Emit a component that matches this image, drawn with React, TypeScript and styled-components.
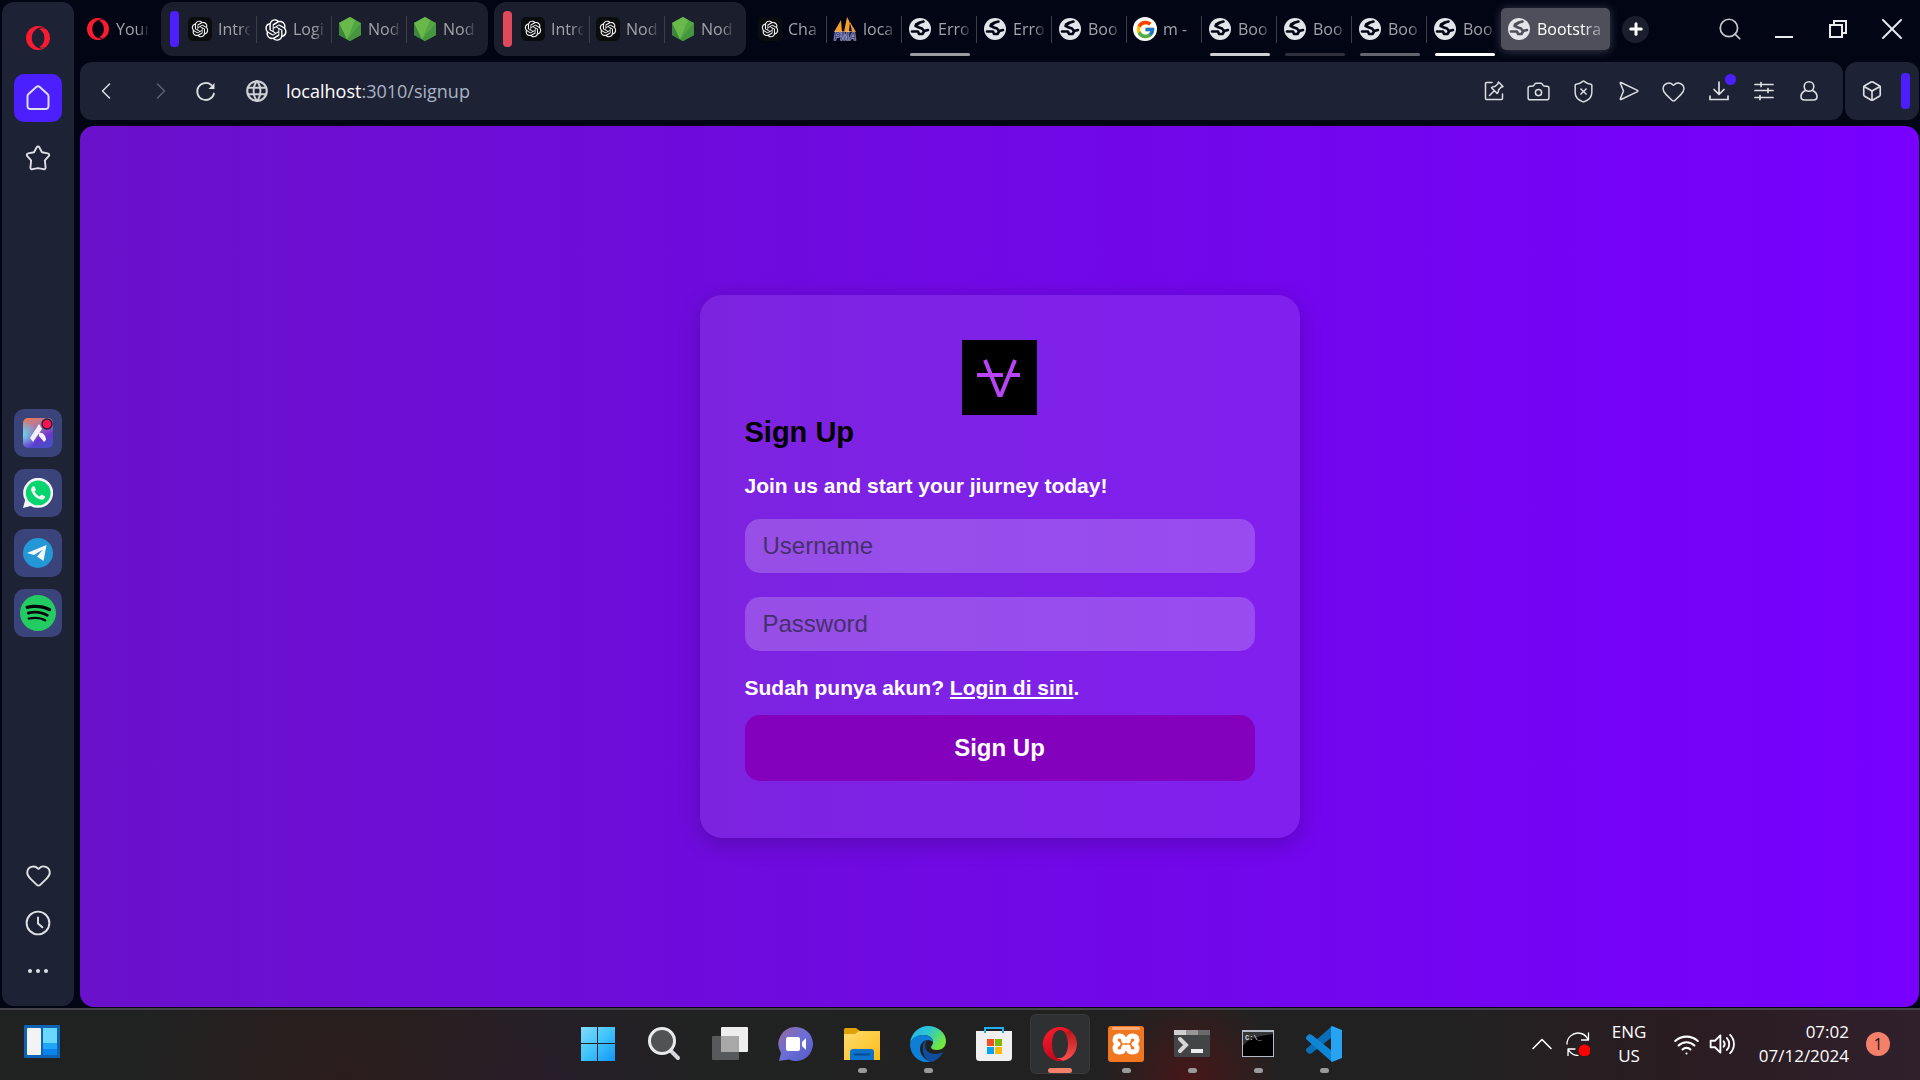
import React, { ReactNode } from "react";
import styled, { createGlobalStyle } from "styled-components";
import { Box, Camera, Heart, Plus, Search, ShieldX, Wifi, X } from "lucide-react";
import { SiOpera, SiSpotify } from "react-icons/si";
import { RiOpenaiFill } from "react-icons/ri";
import { FcGoogle } from "react-icons/fc";
import { TbWorld } from "react-icons/tb";

const uiFont = `"Open Sans", "Noto Sans", sans-serif`;
const pageFont = `"Liberation Sans", Arial, sans-serif`;

const GlobalStyle = createGlobalStyle`
  *, *::before, *::after { box-sizing: border-box; }
  body { margin: 0; background: #020514; font-family: ${uiFont}; }
  button { border: 0; padding: 0; background: none; color: inherit; font: inherit; cursor: pointer; }
  svg { display: block; flex: none; }
`;

/* ---------- shell ---------- */

const Desktop = styled.div`
  min-height: 100vh;
  display: flex;
  flex-direction: column;
  overflow: hidden;
`;

const Browser = styled.div`
  flex: 1;
  display: flex;
  gap: 6px;
  padding: 2px 1px 1px 2px;
  background: #020514;
`;

const Main = styled.div`
  flex: 1;
  min-width: 0;
  display: flex;
  flex-direction: column;
  gap: 6px;
`;

/* ---------- sidebar ---------- */

const Sidebar = styled.nav`
  width: 72px;
  margin-bottom: 1px;
  padding: 12px 0 11px;
  display: flex;
  flex-direction: column;
  align-items: center;
  justify-content: space-between;
  border-radius: 12px;
  background: #1e2235;
`;

const SideGroup = styled.div<{ $gap?: number; $offset?: number }>`
  display: flex;
  flex-direction: column;
  gap: ${(p) => p.$gap ?? 0}px;
  padding-top: ${(p) => p.$offset ?? 0}px;
`;

const SideButton = styled.button<{ $fill?: string }>`
  width: 48px;
  height: 48px;
  display: grid;
  place-items: center;
  border-radius: 10px;
  color: #dfe1e6;
  background: ${(p) => p.$fill ?? "transparent"};
`;

/* ---------- tabs ---------- */

const TabStrip = styled.div`
  height: 54px;
  display: flex;
  align-items: stretch;
`;

const Tabs = styled.div`
  display: flex;
  gap: 6px;
  min-width: 0;
`;

const TabGroup = styled.div<{ $tinted?: boolean }>`
  display: flex;
  align-items: center;
  padding: ${(p) => (p.$tinted ? "0 6px 0 9px" : "0")};
  border-radius: 12px;
  background: ${(p) => (p.$tinted ? "#1b1e2c" : "transparent")};
`;

const Island = styled.span<{ $color: string }>`
  width: 9px;
  height: 36px;
  margin-right: 3px;
  border-radius: 4px;
  background: ${(p) => p.$color};
`;

const Tab = styled.button`
  position: relative;
  width: 75px;
  height: 54px;
  padding-left: 6px;
  display: flex;
  align-items: center;
  gap: 6px;
  color: #a3a4aa;
`;

const ActiveTab = styled.button`
  width: 109px;
  height: 42px;
  margin: 6px 0 0 -7px;
  padding: 0 4px 0 6px;
  display: flex;
  align-items: center;
  gap: 6px;
  border-radius: 5px;
  color: #ffffff;
  background: #4e4f5a;
  box-shadow: 0 1px 10px rgba(130, 130, 150, 0.45);
`;

const TabIcon = styled.span`
  flex: none;
  width: 24px;
  height: 24px;
  display: grid;
  place-items: center;
`;

const TabLabel = styled.span`
  flex: 1;
  min-width: 0;
  overflow: hidden;
  white-space: nowrap;
  text-align: left;
  font-size: 16px;
  line-height: 24px;
  mask-image: linear-gradient(to right, #000 65%, rgba(0, 0, 0, 0.15));
`;

const TabDivider = styled.span<{ $visible: boolean }>`
  width: 1px;
  height: 27px;
  background: ${(p) => (p.$visible ? "#3d404b" : "transparent")};
`;

const Underline = styled.span<{ $color: string }>`
  position: absolute;
  left: 8px;
  bottom: 0;
  width: 60px;
  height: 3px;
  border-radius: 2px;
  background: ${(p) => p.$color};
`;

const ChatBadge = styled.span`
  width: 24px;
  height: 24px;
  display: grid;
  place-items: center;
  border-radius: 5px;
  color: #f2f2f2;
  background: #0b0c0e;
`;

const GoogleBadge = styled(ChatBadge)`
  border-radius: 50%;
  background: #ffffff;
`;

const NewTab = styled.button`
  align-self: center;
  width: 27px;
  height: 27px;
  margin-left: 12px;
  display: grid;
  place-items: center;
  border-radius: 50%;
  color: #ffffff;
  background: #1b1e2c;
`;

const WindowControls = styled.div`
  display: flex;
  margin-left: auto;
`;

const WindowButton = styled.button`
  width: 54px;
  display: grid;
  place-items: center;
  color: #e8eaf0;
`;

/* ---------- toolbar ---------- */

const ToolbarRow = styled.div`
  height: 58px;
  display: flex;
  gap: 2px;
`;

const AddressBar = styled.div`
  flex: 1;
  display: flex;
  align-items: center;
  padding: 0 12px 0 3px;
  border-radius: 12px;
  background: #1e2235;
`;

const ToolButton = styled.button<{ $dim?: boolean }>`
  position: relative;
  width: 45px;
  height: 45px;
  display: grid;
  place-items: center;
  color: ${(p) => (p.$dim ? "#5d6070" : "#dcdee3")};
`;

const NavButtons = styled.div`
  display: flex;
  gap: 10px;
`;

const SiteIcon = styled.span`
  margin: 0 16px;
  color: #cdd0d4;
`;

const Address = styled.div`
  flex: 1;
  font-size: 18px;
  line-height: 24px;
  color: #a9b4c4;
`;

const Host = styled.span`
  color: #ffffff;
`;

const Dot = styled.span`
  position: absolute;
  top: 5px;
  right: 5px;
  width: 11px;
  height: 11px;
  border-radius: 50%;
  background: #4b1fff;
`;

const SidePanelBar = styled.div`
  width: 74px;
  padding: 0 9px 0 4px;
  display: flex;
  align-items: center;
  justify-content: space-between;
  border-radius: 12px;
  background: #1e2235;
`;

const PanelHandle = styled.span`
  width: 9px;
  height: 36px;
  border-radius: 4px;
  background: #4b1fff;
`;

/* ---------- web page ---------- */

const Viewport = styled.main`
  flex: 1;
  display: flex;
  align-items: center;
  justify-content: center;
  border-radius: 14px;
  background: linear-gradient(to right, #6a11cb, #7700ff);
  font-family: ${pageFont};
`;

const Card = styled.form`
  width: 600px;
  max-width: 100%;
  padding: 45px 45px 57px;
  display: flex;
  flex-direction: column;
  border-radius: 22px;
  background: rgba(255, 255, 255, 0.1);
  box-shadow: 0 6px 22px rgba(0, 0, 0, 0.2);
`;

const Logo = styled.div`
  align-self: center;
  width: 75px;
  height: 75px;
  background: #000000;
`;

const Title = styled.h2`
  margin: 0 0 24px;
  font-size: 29px;
  line-height: 34px;
  color: #000000;
`;

const Note = styled.p<{ $after: number }>`
  margin: 0 0 ${(p) => p.$after}px;
  font-size: 21px;
  font-weight: 700;
  line-height: 25px;
  color: #ffffff;
`;

const Field = styled.input`
  width: 100%;
  height: 54px;
  margin-bottom: 24px;
  padding: 0 18px;
  border: 0;
  border-radius: 15px;
  outline: 0;
  font-family: ${pageFont};
  font-size: 24px;
  color: #1d1030;
  background: rgba(255, 255, 255, 0.2);
  &::placeholder { color: #46306b; opacity: 1; }
`;

const LoginLink = styled.a`
  color: #ffffff;
`;

const Submit = styled.button`
  height: 66px;
  border-radius: 15px;
  font-family: ${pageFont};
  font-size: 24px;
  font-weight: 700;
  color: #ffffff;
  background: #8300bd;
`;

/* ---------- taskbar ---------- */

const Taskbar = styled.footer`
  height: 72px;
  padding-bottom: 2px;
  display: grid;
  grid-template-columns: 1fr auto 1fr;
  align-items: center;
  border-top: 2px solid #454347;
  background:
    radial-gradient(circle at 62% 100%, rgba(96, 16, 16, 0.6), transparent 90px),
    radial-gradient(circle at 18% 100%, rgba(60, 20, 20, 0.4), transparent 220px),
    radial-gradient(circle at 28% 100%, rgba(50, 24, 56, 0.35), transparent 160px),
    linear-gradient(to right, #202222 0%, #222122 76%, #2a1c21 88%, #30202c 100%);
  color: #ffffff;
`;

const TaskStart = styled.div`
  padding-left: 24px;
`;

const TaskApps = styled.div`
  display: flex;
  gap: 6px;
  padding-left: 2px;
`;

const TaskApp = styled.button<{ $active?: boolean }>`
  position: relative;
  width: 60px;
  height: 60px;
  display: grid;
  place-items: center;
  border-radius: 6px;
  border: 1px solid ${(p) => (p.$active ? "#3a3a3c" : "transparent")};
  background: ${(p) => (p.$active ? "#2f3031" : "transparent")};
`;

const Running = styled.span<{ $active?: boolean }>`
  position: absolute;
  bottom: 0;
  justify-self: center;
  width: ${(p) => (p.$active ? 24 : 9)}px;
  height: 5px;
  border-radius: 3px;
  background: ${(p) => (p.$active ? "#f4806a" : "#9b9a9b")};
`;

const Tray = styled.div`
  display: flex;
  align-items: center;
  justify-content: flex-end;
  padding-right: 30px;
  font-size: 17px;
  line-height: 24px;
`;

const TrayButton = styled.button`
  width: 36px;
  height: 48px;
  display: grid;
  place-items: center;
`;

const Language = styled.button`
  width: 66px;
  text-align: center;
`;

const Network = styled.div`
  display: flex;
  margin-left: 6px;
`;

const Clock = styled.div`
  width: 109px;
  text-align: right;
`;

const Badge = styled.span`
  width: 24px;
  height: 24px;
  margin-left: 17px;
  border-radius: 50%;
  font-size: 16px;
  text-align: center;
  color: #1d1514;
  background: #f4806a;
`;

/* ---------- drawings ---------- */

type IconProps = { size?: number; width?: number; children: ReactNode };

const Line = ({ size = 24, width = 1.5, children }: IconProps) => (
  <svg width={size} height={size} viewBox="0 0 24 24" fill="none" stroke="currentColor" strokeWidth={width} strokeLinecap="round" strokeLinejoin="round" aria-hidden="true">
    {children}
  </svg>
);

const NodeIcon = () => (
  <svg width="24" height="24" viewBox="0 0 24 24" aria-hidden="true">
    <path d="M12 0 23 6v12l-11 6L1 18V6z" fill="#53a644" />
    <path d="M12 0 17 3 9 22.400 1 6z" fill="#69b94a" />
    <path d="M1 6 9 22.400 1 18z" fill="#3e863d" />
    <path d="M23 6v12l-11 6-3-1.600z" fill="#46953f" />
  </svg>
);

const WorldIcon = ({ ink = "#020514" }: { ink?: string }) => (
  <svg width="22" height="22" viewBox="0 0 22 22" aria-hidden="true">
    <circle cx="11" cy="11" r="11" fill="#e2e5ea" />
    <g fill="none" stroke={ink} strokeWidth="2.600" strokeLinecap="round" strokeLinejoin="round">
      <path d="M14.500 3.500 11 4.500 7 6.500l1.500 2.500 4.500 1.500 2 2.500 4-1" />
      <path d="M3 13.500h6l1 2.500h3.500l1.500-2.500" />
      <path d="M10 5 6.500 8" />
    </g>
  </svg>
);

const PmaIcon = () => (
  <svg width="24" height="24" viewBox="0 0 24 24" aria-hidden="true">
    <path d="M8 3 1 15h8zM14 0 11 15h8C18 9 17 5 14 0zM17 5l6 10-7-1z" fill="#f89c2c" />
    <text x="12" y="23" textAnchor="middle" fontFamily="Liberation Sans, sans-serif" fontSize="10" fontWeight="700" fontStyle="italic" fill="#44488c" stroke="#c8cae8" strokeWidth="1" paintOrder="stroke">PMA</text>
  </svg>
);

const ChatIcon = () => (
  <ChatBadge>
    <RiOpenaiFill size={20} />
  </ChatBadge>
);

const favicons = {
  opera: () => <SiOpera size={22} color="#fb1b30" />,
  chat: ChatIcon,
  openai: () => <RiOpenaiFill size={26} color="#ffffff" />,
  node: NodeIcon,
  pma: PmaIcon,
  world: () => <WorldIcon />,
  google: () => (
    <GoogleBadge>
      <FcGoogle size={21} />
    </GoogleBadge>
  ),
};

const AriaIcon = () => (
  <svg width="34" height="34" viewBox="0 0 34 34" aria-hidden="true">
    <defs>
      <linearGradient id="aria" x1="0" y1="0" x2="0.4" y2="1">
        <stop offset="0" stopColor="#f47a4a" />
        <stop offset="0.4" stopColor="#a878a8" />
        <stop offset="0.8" stopColor="#6a35cf" />
        <stop offset="1" stopColor="#4c4cc8" />
      </linearGradient>
      <radialGradient id="ariaGlow" cx="0" cy="0.55" r="0.5">
        <stop offset="0" stopColor="#6cd4ee" />
        <stop offset="1" stopColor="#6cd4ee" stopOpacity="0" />
      </radialGradient>
    </defs>
    <rect x="2" y="2" width="30" height="30" rx="5" fill="url(#aria)" />
    <rect x="2" y="2" width="30" height="30" rx="5" fill="url(#ariaGlow)" />
    <path d="M18 8 21 13 12 26 9 22z" fill="#f2f2f8" />
    <path d="M18 17c4-1 7 3 7 7l-2 2-5-6z" fill="#f2f2f8" />
    <circle cx="26" cy="8" r="5" fill="#ff1450" stroke="#1e2235" strokeWidth="1.500" />
  </svg>
);

const WhatsappIcon = () => (
  <svg width="30" height="30" viewBox="0 0 30 30" aria-hidden="true">
    <path d="M0 30 2.100 22.300A15 15 0 1 1 7.700 27.900z" fill="#f3f5f7" />
    <circle cx="15.200" cy="14.900" r="12.400" fill="#06d46e" />
    <path d="M10.500 8.200c-2.400.7-2.800 3.500-1.700 5.700 1.900 3.900 5 6.600 8.900 7.700 2.300.6 4.500-.7 4.500-3.100l-3.700-1.900-1.800 1.900c-2.400-1-4-2.700-5.100-4.900l1.400-1.700-1.500-3.500z" fill="#f3f5f7" />
  </svg>
);

const TelegramIcon = () => (
  <svg width="30" height="30" viewBox="0 0 30 30" aria-hidden="true">
    <circle cx="15" cy="15" r="15" fill="#2497d6" />
    <path d="M4 15 23.500 7 20.500 23 14 18.500 20 11.500 11 17z" fill="#f4f7fa" />
  </svg>
);

const WidgetsIcon = () => (
  <svg width="36" height="33" viewBox="0 0 36 33" aria-hidden="true">
    <rect width="36" height="33" rx="1" fill="#0f62b4" />
    <rect x="3" y="3" width="14" height="27" rx="1" fill="#f3f3f3" />
    <rect x="19" y="3" width="14" height="15" fill="#68d8ff" />
    <rect x="19" y="18" width="14" height="6" fill="#1fa4f6" />
    <rect x="19" y="24" width="14" height="6" fill="#0884ea" />
  </svg>
);

const StartIcon = () => (
  <svg width="36" height="36" viewBox="0 0 36 36" aria-hidden="true">
    <defs>
      <linearGradient id="start" gradientUnits="userSpaceOnUse" x1="0" y1="0" x2="36" y2="36">
        <stop offset="0" stopColor="#85dcfc" />
        <stop offset="0.5" stopColor="#3fc4fb" />
        <stop offset="1" stopColor="#0f92f6" />
      </linearGradient>
    </defs>
    <path d="M1 1h16v16H1zM18 1h17v16H18zM1 18h16v17H1zM18 18h17v17H18z" fill="url(#start)" />
  </svg>
);

const FinderIcon = () => (
  <svg width="36" height="36" viewBox="0 0 36 36" aria-hidden="true">
    <path d="M25 25 32 32" stroke="#d6d8dc" strokeWidth="4" strokeLinecap="round" />
    <circle cx="16" cy="15" r="12.500" fill="#505254" stroke="#e8eaec" strokeWidth="3" />
  </svg>
);

const TaskViewIcon = () => (
  <svg width="36" height="36" viewBox="0 0 36 36" aria-hidden="true">
    <rect x="9" y="1" width="27" height="25" rx="1" fill="#eeeeee" />
    <rect x="0" y="10" width="27" height="24" rx="1" fill="#58595a" />
    <rect x="9" y="10" width="18" height="16" fill="#a8a8a9" />
  </svg>
);

const MeetIcon = () => (
  <svg width="36" height="36" viewBox="0 0 36 36" aria-hidden="true">
    <defs>
      <linearGradient id="meet" x1="0" y1="0" x2="1" y2="1">
        <stop offset="0.100" stopColor="#8f6cab" />
        <stop offset="0.500" stopColor="#6a6ed6" />
        <stop offset="1" stopColor="#5558c8" />
      </linearGradient>
    </defs>
    <path d="M18 1a17 17 0 1 1-7 32.500L1 35l2-8A17 17 0 0 1 18 1z" fill="url(#meet)" />
    <rect x="8" y="11" width="14" height="14" rx="2" fill="#ffffff" />
    <path d="M24 16 28 12v12l-4-4z" fill="#ffffff" />
  </svg>
);

const FolderIcon = () => (
  <svg width="36" height="36" viewBox="0 0 36 36" aria-hidden="true">
    <defs>
      <linearGradient id="folder" x1="0" y1="0" x2="1" y2="1">
        <stop offset="0" stopColor="#ffdc72" />
        <stop offset="1" stopColor="#fabc12" />
      </linearGradient>
    </defs>
    <path d="M0 3 1 2h11l4 3v5H0z" fill="#e0a008" />
    <path d="M0 8h11l4-3h21v29H0z" fill="url(#folder)" />
    <path d="M6 34V26c0-2 1-3 3-3h18c2 0 3 1 3 3v8z" fill="#0c72cc" />
    <path d="M11 28.500h14" stroke="#064a90" strokeWidth="2" strokeLinecap="round" />
  </svg>
);

const EdgeIcon = () => (
  <svg width="36" height="36" viewBox="0 0 36 36" aria-hidden="true">
    <defs>
      <linearGradient id="edgeTop" x1="0" y1="0" x2="1" y2="0.500">
        <stop offset="0" stopColor="#26b0ee" />
        <stop offset="0.500" stopColor="#2cc6d2" />
        <stop offset="1" stopColor="#70e83c" />
      </linearGradient>
    </defs>
    <path d="M0 17C1 7 9 0 18 0c10 0 18 7 18 15 0 6-4 9-9 9-4 0-6-1-6-3 0-1 2-2 2-5 0-4-4-7-9-7C8 9 2 12 0 17z" fill="url(#edgeTop)" />
    <path d="M0 18C1 12 7 9 13 9c6 0 10 3 10 7-1-1-3-2-5-2-5 0-8 4-8 9 0 6 5 11 11 13C9 38 0 29 0 18z" fill="#0d7fd8" />
    <path d="M13 20c0-3 2-5 4-6-4 5-2 14 8 14 4 0 6-1 8-2-2 5-7 9-12 10-6-2-9-9-8-16z" fill="#0d4f9e" />
  </svg>
);

const StoreIcon = () => (
  <svg width="36" height="36" viewBox="0 0 36 36" aria-hidden="true">
    <path d="M0 5h36v26c0 3-1 4-4 4H4c-3 0-4-1-4-4z" fill="#f0f0f0" />
    <path d="M9 7V2h18v5" fill="none" stroke="#1fb0f2" strokeWidth="2" />
    <rect x="11" y="13" width="7" height="7" fill="#f25022" />
    <rect x="19" y="13" width="7" height="7" fill="#7fba00" />
    <rect x="11" y="21" width="7" height="7" fill="#00a4ef" />
    <rect x="19" y="21" width="7" height="7" fill="#ffb900" />
  </svg>
);

const OperaIcon = () => (
  <svg width="36" height="36" viewBox="0 0 36 36" aria-hidden="true">
    <defs>
      <linearGradient id="opera" x1="0" y1="0" x2="0.300" y2="1">
        <stop offset="0" stopColor="#ff1b2d" />
        <stop offset="1" stopColor="#c00a1c" />
      </linearGradient>
      <linearGradient id="operaSide" x1="0" y1="0" x2="0" y2="1">
        <stop offset="0" stopColor="#b01015" />
        <stop offset="1" stopColor="#ff5050" />
      </linearGradient>
    </defs>
    <path d="M18 1a17 17 0 0 1 0 34c-3 0-6-1-8-3h8c5 0 8-7 8-14s-3-14-8-14z" fill="url(#operaSide)" />
    <path fillRule="evenodd" d="M18 1a17 17 0 1 0 3 33.700c-2-.5-2-1.700-3-1.700-5 0-8-7-8-15S13 4 18 4c3 0 5 1 7 3l2-3c-3-2-6-3-9-3z" fill="url(#opera)" />
  </svg>
);

const XamppIcon = () => (
  <svg width="36" height="36" viewBox="0 0 36 36" aria-hidden="true">
    <rect width="36" height="36" rx="3" fill="#f0761f" />
    <rect x="4" y="1" width="28" height="3" rx="1" fill="#f9ab73" />
    <g fill="none" stroke="#ffffff" strokeWidth="5" strokeLinecap="round" strokeLinejoin="round">
      <path d="M16 15c0-3-1-5-4.500-5S7 12 7 14s1 3 3 4c-2 1-3 2-3 4s1 4 4.500 4 4.500-2 4.500-5" />
      <path d="M20 15c0-3 1-5 4.500-5s4.500 2 4.500 4-1 3-3 4c2 1 3 2 3 4s-1 4-4.500 4-4.500-2-4.500-5" />
      <path d="M16 14h4M16 22h4" />
    </g>
  </svg>
);

const TerminalIcon = () => (
  <svg width="36" height="36" viewBox="0 0 36 36" aria-hidden="true">
    <rect y="4" width="36" height="27" rx="1" fill="#434445" />
    <path d="M0 4h12v5H0z" fill="#cfcfcf" />
    <path d="M12 4h12v5H12z" fill="#979797" />
    <path d="M24 4h12v5H24z" fill="#6a6a6a" />
    <path d="M6 13 12 19 6 25" fill="none" stroke="#d6d6d6" strokeWidth="4" strokeLinecap="round" />
    <rect x="17" y="23" width="12" height="4" fill="#ededed" />
  </svg>
);

const CmdIcon = () => (
  <svg width="36" height="36" viewBox="0 0 36 36" aria-hidden="true">
    <rect x="2" y="4" width="32" height="27" fill="#b5bcc6" />
    <rect x="3" y="6" width="30" height="24" fill="#000000" />
    <path d="M3 6h30v2C18 10 8 12 3 20z" fill="#343638" />
    <text x="5" y="14" fontFamily="Liberation Mono, monospace" fontSize="7" fontWeight="700" fill="#d5d5d5">C:\_</text>
  </svg>
);

const CodeIcon = () => (
  <svg width="36" height="36" viewBox="0 0 36 36" aria-hidden="true">
    <path d="M26 0 0 23v2l3 3 3-1 20-16z" fill="#0a6fb8" />
    <path d="M26 36 0 13v-2l3-3 3 1 20 16z" fill="#0f86d3" />
    <path d="M26 0 36 4v28l-10 4-1-1V1z" fill="#27a3f2" />
  </svg>
);

/* ---------- data ---------- */

type TabItem = { icon: keyof typeof favicons; label: string; line?: string };

const operaTabs: TabItem[] = [{ icon: "opera", label: "Your" }];
const violetTabs: TabItem[] = [
  { icon: "chat", label: "Intro" },
  { icon: "openai", label: "Logi" },
  { icon: "node", label: "Nod" },
  { icon: "node", label: "Nod" },
];
const redTabs: TabItem[] = [
  { icon: "chat", label: "Intro" },
  { icon: "chat", label: "Nod" },
  { icon: "node", label: "Nod" },
];
const looseTabs: TabItem[] = [
  { icon: "chat", label: "Cha" },
  { icon: "pma", label: "loca" },
  { icon: "world", label: "Erro", line: "#9c9da3" },
  { icon: "world", label: "Erro" },
  { icon: "world", label: "Boo" },
  { icon: "google", label: "m -" },
  { icon: "world", label: "Boo", line: "#cfcfd2" },
  { icon: "world", label: "Boo", line: "#2e313d" },
  { icon: "world", label: "Boo", line: "#63656f" },
  { icon: "world", label: "Boo", line: "#ffffff" },
];

const taskApps = [
  { name: "Start", icon: <StartIcon /> },
  { name: "Search", icon: <FinderIcon /> },
  { name: "Task View", icon: <TaskViewIcon /> },
  { name: "Chat", icon: <MeetIcon /> },
  { name: "File Explorer", icon: <FolderIcon />, running: true },
  { name: "Edge", icon: <EdgeIcon />, running: true },
  { name: "Store", icon: <StoreIcon /> },
  { name: "Opera", icon: <OperaIcon />, running: true, active: true },
  { name: "XAMPP", icon: <XamppIcon />, running: true },
  { name: "Terminal", icon: <TerminalIcon />, running: true },
  { name: "Command Prompt", icon: <CmdIcon />, running: true },
  { name: "Visual Studio Code", icon: <CodeIcon />, running: true },
];

const TabList = ({ items, island }: { items: TabItem[]; island?: string }) => (
  <TabGroup $tinted={Boolean(island)}>
    {island && <Island $color={island} />}
    {items.map((item, i) => {
      const Icon = favicons[item.icon];
      return (
        <Tab key={i} type="button">
          <TabIcon>
            <Icon />
          </TabIcon>
          <TabLabel>{item.label}</TabLabel>
          <TabDivider $visible={i < items.length - 1} />
          {item.line && <Underline $color={item.line} />}
        </Tab>
      );
    })}
  </TabGroup>
);

const BrowserSidebar = () => (
  <Sidebar aria-label="Sidebar">
    <SideGroup $gap={12}>
      <SideButton aria-label="Menu">
        <SiOpera size={24} color="#fb1b30" />
      </SideButton>
      <SideButton aria-label="Home" $fill="#4b1fff">
        <Line size={28} width={1.7}>
          <path d="M3 10.500c0-.8.3-1.400.9-1.900l6.600-6c.9-.8 2.100-.8 3 0l6.600 6c.6.500.9 1.100.9 1.900V19a2.500 2.500 0 0 1-2.500 2.500h-13A2.500 2.500 0 0 1 3 19z" />
        </Line>
      </SideButton>
      <SideButton aria-label="Bookmarks">
        <Line size={28} width={1.6}>
          <path d="M10.900 2.800c.5-.9 1.700-.9 2.200 0l2.300 4.300 5 1c1.200.2 1.600 1.400.8 2.300l-3.300 3.700.6 6.100c.1 1.100-.9 1.800-1.800 1.400L12 20.700l-4.700.9c-.9.400-1.900-.3-1.800-1.400l.6-6.100-3.300-3.700c-.8-.9-.4-2.100.8-2.300l5-1z" />
        </Line>
      </SideButton>
    </SideGroup>
    <SideGroup $gap={12} $offset={13}>
      <SideButton aria-label="Aria" $fill="#3a437a"><AriaIcon /></SideButton>
      <SideButton aria-label="WhatsApp" $fill="#3a437a"><WhatsappIcon /></SideButton>
      <SideButton aria-label="Telegram" $fill="#3a437a"><TelegramIcon /></SideButton>
      <SideButton aria-label="Spotify" $fill="#3a437a">
        <svg width="36" height="36" viewBox="0 0 36 36" aria-hidden="true">
          <circle cx="18" cy="18" r="17" fill="#04070a" />
          <SiSpotify size={36} color="#23cc62" />
        </svg>
      </SideButton>
    </SideGroup>
    <SideGroup>
      <SideButton aria-label="Favourites"><Heart size={27} strokeWidth={1.7} /></SideButton>
      <SideButton aria-label="History">
        <Line size={26} width={1.8}>
          <circle cx="12" cy="12" r="10.500" />
          <path d="M12 7v5.500l4 3.500" />
        </Line>
      </SideButton>
      <SideButton aria-label="More">
        <svg width="20" height="4" viewBox="0 0 20 4" fill="currentColor" aria-hidden="true">
          <circle cx="2" cy="2" r="2" />
          <circle cx="10" cy="2" r="2" />
          <circle cx="18" cy="2" r="2" />
        </svg>
      </SideButton>
    </SideGroup>
  </Sidebar>
);

const BrowserTabs = () => (
  <TabStrip>
    <Tabs>
      <TabList items={operaTabs} />
      <TabList items={violetTabs} island="#4b1fff" />
      <TabList items={redTabs} island="#e0485c" />
      <TabList items={looseTabs} />
      <ActiveTab type="button">
        <TabIcon><WorldIcon ink="#4e4f5a" /></TabIcon>
        <TabLabel>Bootstra</TabLabel>
      </ActiveTab>
    </Tabs>
    <NewTab type="button" aria-label="New tab"><Plus size={18} strokeWidth={4} /></NewTab>
    <WindowControls>
      <WindowButton aria-label="Search tabs"><Search size={26} strokeWidth={1.6} color="#c6c8ce" /></WindowButton>
      <WindowButton aria-label="Minimise">
        <svg width="18" height="18" viewBox="0 0 18 18" aria-hidden="true"><path d="M0 17h18" stroke="currentColor" strokeWidth="2" /></svg>
      </WindowButton>
      <WindowButton aria-label="Restore">
        <svg width="18" height="18" viewBox="0 0 18 18" fill="none" stroke="currentColor" strokeWidth="2" aria-hidden="true">
          <path d="M1 5h12v12H1zM5 5V1h12v12h-4" />
        </svg>
      </WindowButton>
      <WindowButton aria-label="Close"><X size={36} strokeWidth={1.3} /></WindowButton>
    </WindowControls>
  </TabStrip>
);

const BrowserToolbar = () => (
  <ToolbarRow>
    <AddressBar>
      <NavButtons>
        <ToolButton aria-label="Back"><Line><path d="M15.500 5 8.500 12l7 7" /></Line></ToolButton>
        <ToolButton aria-label="Forward" $dim><Line><path d="M8.500 5l7 7-7 7" /></Line></ToolButton>
      </NavButtons>
      <ToolButton aria-label="Reload">
        <Line width={1.8}>
          <path d="M20 14.500A8.500 8.500 0 1 1 17.500 6.200" />
          <path d="M20.500 4v6h-6z" fill="currentColor" stroke="none" />
        </Line>
      </ToolButton>
      <SiteIcon><TbWorld size={26} /></SiteIcon>
      <Address><Host>localhost</Host>:3010/signup</Address>
      <ToolButton aria-label="Pin page">
        <Line>
          <path d="M10 3.500H4.500a1 1 0 0 0-1 1v15a1 1 0 0 0 1 1h15a1 1 0 0 0 1-1V15" />
          <path d="M16.500 3 21 7.500l-2 .8-2.500 2.700c.3 1.500-.3 2.700-1.300 3.500L9.500 8.800c.8-1 2-1.600 3.500-1.300l2.700-2.500zM12 12l-4.500 4.500" />
        </Line>
      </ToolButton>
      <ToolButton aria-label="Snapshot"><Camera size={25} strokeWidth={1.4} /></ToolButton>
      <ToolButton aria-label="Ad blocker"><ShieldX size={25} strokeWidth={1.4} /></ToolButton>
      <ToolButton aria-label="Send">
        <Line><path d="M4 3.500c-.5-.3-.9.200-.7.700L6.500 12l-3.200 7.800c-.2.500.2 1 .7.700l16.500-7.900c.5-.3.500-.9 0-1.200z" /></Line>
      </ToolButton>
      <ToolButton aria-label="Save"><Heart size={25} strokeWidth={1.4} /></ToolButton>
      <ToolButton aria-label="Downloads">
        <Line width={1.7}><path d="M12 3v12M7 10.500l5 5 5-5M3 17v3.500h18V17" /></Line>
        <Dot />
      </ToolButton>
      <ToolButton aria-label="Easy setup">
        <Line width={1.7}><path d="M3 5.500h18M3 11.500h18M3 18.500h18M9 3.500v4M16 9.500v4M8 16.500v4" /></Line>
      </ToolButton>
      <ToolButton aria-label="Profile">
        <Line width={1.6}>
          <circle cx="12" cy="7.500" r="4.800" />
          <path d="M8.500 11.500c-2.700 1.200-4.500 3-4.500 6 0 2.200 1.500 3.500 3.500 3.500h9c2 0 3.500-1.300 3.500-3.500 0-3-1.800-4.800-4.500-6" />
        </Line>
      </ToolButton>
    </AddressBar>
    <SidePanelBar>
      <ToolButton aria-label="Extensions"><Box size={22} strokeWidth={1.8} /></ToolButton>
      <PanelHandle />
    </SidePanelBar>
  </ToolbarRow>
);

const SignUpPage = () => (
  <Viewport>
    <Card onSubmit={(e) => e.preventDefault()}>
      <Logo>
        <svg width="75" height="75" viewBox="0 0 75 75" fill="none" stroke="#b745f5" strokeWidth="4" role="img" aria-label="Logo">
          <path d="M23 20 37 55h2L53 20" />
          <path d="M15 35h26M46 35h12" />
        </svg>
      </Logo>
      <Title>Sign Up</Title>
      <Note $after={21}>Join us and start your jiurney today!</Note>
      <Field type="text" placeholder="Username" aria-label="Username" />
      <Field type="password" placeholder="Password" aria-label="Password" />
      <Note $after={15}>
        Sudah punya akun? <LoginLink href="#login">Login di sini</LoginLink>.
      </Note>
      <Submit type="submit">Sign Up</Submit>
    </Card>
  </Viewport>
);

const SystemTaskbar = () => (
  <Taskbar>
    <TaskStart>
      <button type="button" aria-label="Widgets"><WidgetsIcon /></button>
    </TaskStart>
    <TaskApps>
      {taskApps.map((app) => (
        <TaskApp key={app.name} type="button" aria-label={app.name} $active={app.active}>
          {app.icon}
          {app.running && <Running $active={app.active} />}
        </TaskApp>
      ))}
    </TaskApps>
    <Tray>
      <TrayButton aria-label="Hidden icons"><Line width={1.6}><path d="M3 16.500l9-9 9 9" /></Line></TrayButton>
      <TrayButton aria-label="Updates">
        <Line width={1.3}>
          <path d="M1 12C1 5 7 1 12 1c4 0 8 2 10.500 7M22.500 1v7h-7M9 17H2v7M2 17c2 4 6 6.500 10 6.500" />
          <circle cx="18.500" cy="18.500" r="6" fill="#ff0000" stroke="none" />
        </Line>
      </TrayButton>
      <Language type="button">ENG<br />US</Language>
      <Network>
        <TrayButton aria-label="Wi-Fi"><Wifi size={27} strokeWidth={1.9} /></TrayButton>
        <TrayButton aria-label="Volume">
          <Line size={26} width={1.7}>
            <path d="M1.500 9h4l5-5v16l-5-5h-4zM13.500 9.500a4 4 0 0 1 0 5M16.500 6.500a8 8 0 0 1 0 11M19.500 3.500a12 12 0 0 1 0 17" />
          </Line>
        </TrayButton>
      </Network>
      <Clock>07:02<br />07/12/2024</Clock>
      <Badge>1</Badge>
    </Tray>
  </Taskbar>
);

export default function App() {
  return (
    <>
      <GlobalStyle />
      <Desktop>
        <Browser>
          <BrowserSidebar />
          <Main>
            <BrowserTabs />
            <BrowserToolbar />
            <SignUpPage />
          </Main>
        </Browser>
        <SystemTaskbar />
      </Desktop>
    </>
  );
}
